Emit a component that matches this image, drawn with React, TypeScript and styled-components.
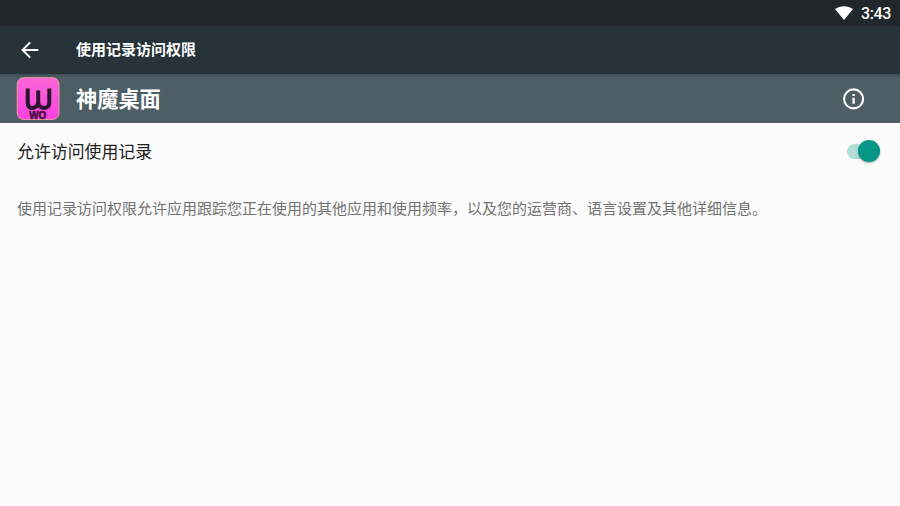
import React from "react";
import styled, { createGlobalStyle } from "styled-components";

const GlobalStyle = createGlobalStyle`
  * { box-sizing: border-box; }
  html, body { margin: 0; padding: 0; background: #fbfbfb; overflow: hidden; }
  body { font-family: Roboto, "Noto Sans CJK SC", sans-serif; }
  svg { display: block; flex: none; }
`;

const Screen = styled.div`
  display: flex;
  flex-direction: column;
  width: 900px;
  height: 506px;
  background: #fbfbfb;
`;

const StatusBar = styled.div`
  display: flex;
  flex: none;
  align-items: center;
  justify-content: flex-end;
  gap: 8px;
  height: 26px;
  padding-right: 9px;
  background: #21272a;
  color: #fff;
`;

const Clock = styled.span`
  font-size: 16px;
  font-weight: 500;
  line-height: 26px;
  padding-top: 1px;
  letter-spacing: -0.35px;
`;

const AppBar = styled.header`
  display: flex;
  flex: none;
  align-items: center;
  height: 48px;
  padding-left: 18px;
  background: #263338;
`;

const BarTitle = styled.h1`
  margin: 0 0 0 34px;
  padding-bottom: 2px;
  color: #fff;
  font-family: "Noto Sans CJK SC", sans-serif;
  font-size: 15px;
  font-weight: 700;
  line-height: 24px;
`;

const AppHeader = styled.section`
  display: flex;
  flex: none;
  align-items: center;
  height: 49px;
  padding: 0 34px 0 16px;
  background: linear-gradient(#3e4d53 0, #4e5e65 4px);
`;

const AppName = styled.h2`
  flex: 1;
  margin: 0 0 0 16px;
  padding-bottom: 1px;
  color: #fff;
  font-family: "Noto Sans CJK SC", sans-serif;
  font-size: 21.2px;
  font-weight: 700;
  line-height: 30px;
`;

const SettingRow = styled.div`
  display: flex;
  flex: none;
  align-items: center;
  justify-content: space-between;
  height: 57px;
  padding: 0 20px 0 17px;
`;

const SettingLabel = styled.span`
  padding-bottom: 2px;
  color: #212121;
  font-family: "Noto Sans CJK SC", sans-serif;
  font-size: 16.9px;
  line-height: 26px;
`;

const Track = styled.button<{ $on: boolean }>`
  display: flex;
  align-items: center;
  justify-content: ${(p) => (p.$on ? "flex-end" : "flex-start")};
  width: 33px;
  height: 15px;
  margin: 0 0 1px;
  padding: 0;
  border: 0;
  border-radius: 8px;
  background: ${(p) => (p.$on ? "#b1dfd8" : "#b9b9b9")};
`;

const Thumb = styled.span<{ $on: boolean }>`
  flex: none;
  width: 22px;
  height: 22px;
  border-radius: 50%;
  background: ${(p) => (p.$on ? "#069688" : "#f1f1f1")};
  box-shadow: 0 1px 2px rgba(0, 0, 0, 0.35);
`;

const Description = styled.p`
  margin: 15px 17px 0;
  color: #737373;
  font-family: "Noto Sans CJK SC", sans-serif;
  font-size: 15px;
  line-height: 26px;
  white-space: nowrap;
`;

const WifiIcon = () => (
  <svg width="18" height="14" viewBox="0 0 18 14">
    <path d="M0 3.1C5 -.8 13 -.8 18 3.1L9 13.9Z" fill="#fff" />
  </svg>
);

const BackIcon = () => (
  <svg width="24" height="24" viewBox="0 0 24 24">
    <path d="M20.3 12H4.8M12.2 4.4L4.6 12L12.2 19.6" fill="none" stroke="#fff" strokeWidth="2" />
  </svg>
);

const InfoIcon = () => (
  <svg width="24" height="24" viewBox="0 0 24 24">
    <circle cx="11.6" cy="11.9" r="9.5" fill="none" stroke="#fff" strokeWidth="2.1" />
    <path d="M10.4 7h2.4v2.1h-2.4zM10.4 10.8h2.4v6h-2.4z" fill="#fff" />
  </svg>
);

const LauncherIcon = () => (
  <svg width="44" height="44" viewBox="0 0.5 44 44">
    <defs>
      <linearGradient id="launcherFill" x1="0" y1="0" x2="0" y2="1">
        <stop offset="0" stopColor="#fd66d8" />
        <stop offset="0.45" stopColor="#fa55db" />
        <stop offset="1" stopColor="#fb3fe0" />
      </linearGradient>
    </defs>
    <rect x="1.2" y="1.2" width="41.8" height="41.8" rx="6.5" fill="url(#launcherFill)" stroke="#efa49d" strokeWidth="0.9" />
    <path
      d="M11.7 12V26C11.7 30 14 31.4 16.4 31.4C19.8 31.4 22.2 29 22.2 25V14M22.2 25C22.2 29 24.4 31.4 27.8 31.4C31.4 31.4 33.3 29.5 33.3 26V12"
      fill="none"
      stroke="#2b1530"
      strokeWidth="4"
    />
    <text
      x="21.8"
      y="42.4"
      textAnchor="middle"
      textLength="17"
      lengthAdjust="spacingAndGlyphs"
      fontFamily="Liberation Sans, sans-serif"
      fontSize="10"
      fontWeight="700"
      fill="#451040"
      stroke="#451040"
      strokeWidth="0.6"
    >
      WO
    </text>
  </svg>
);

export default function App() {
  const [allowed, setAllowed] = React.useState(true);

  return (
    <>
      <GlobalStyle />
      <Screen>
        <StatusBar>
          <WifiIcon />
          <Clock>3:43</Clock>
        </StatusBar>
        <AppBar>
          <BackIcon />
          <BarTitle>使用记录访问权限</BarTitle>
        </AppBar>
        <AppHeader>
          <LauncherIcon />
          <AppName>神魔桌面</AppName>
          <InfoIcon />
        </AppHeader>
        <SettingRow>
          <SettingLabel>允许访问使用记录</SettingLabel>
          <Track
            $on={allowed}
            role="switch"
            aria-checked={allowed}
            aria-label="允许访问使用记录"
            onClick={() => setAllowed(!allowed)}
          >
            <Thumb $on={allowed} />
          </Track>
        </SettingRow>
        <Description>
          使用记录访问权限允许应用跟踪您正在使用的其他应用和使用频率，以及您的运营商、语言设置及其他详细信息。
        </Description>
      </Screen>
    </>
  );
}
